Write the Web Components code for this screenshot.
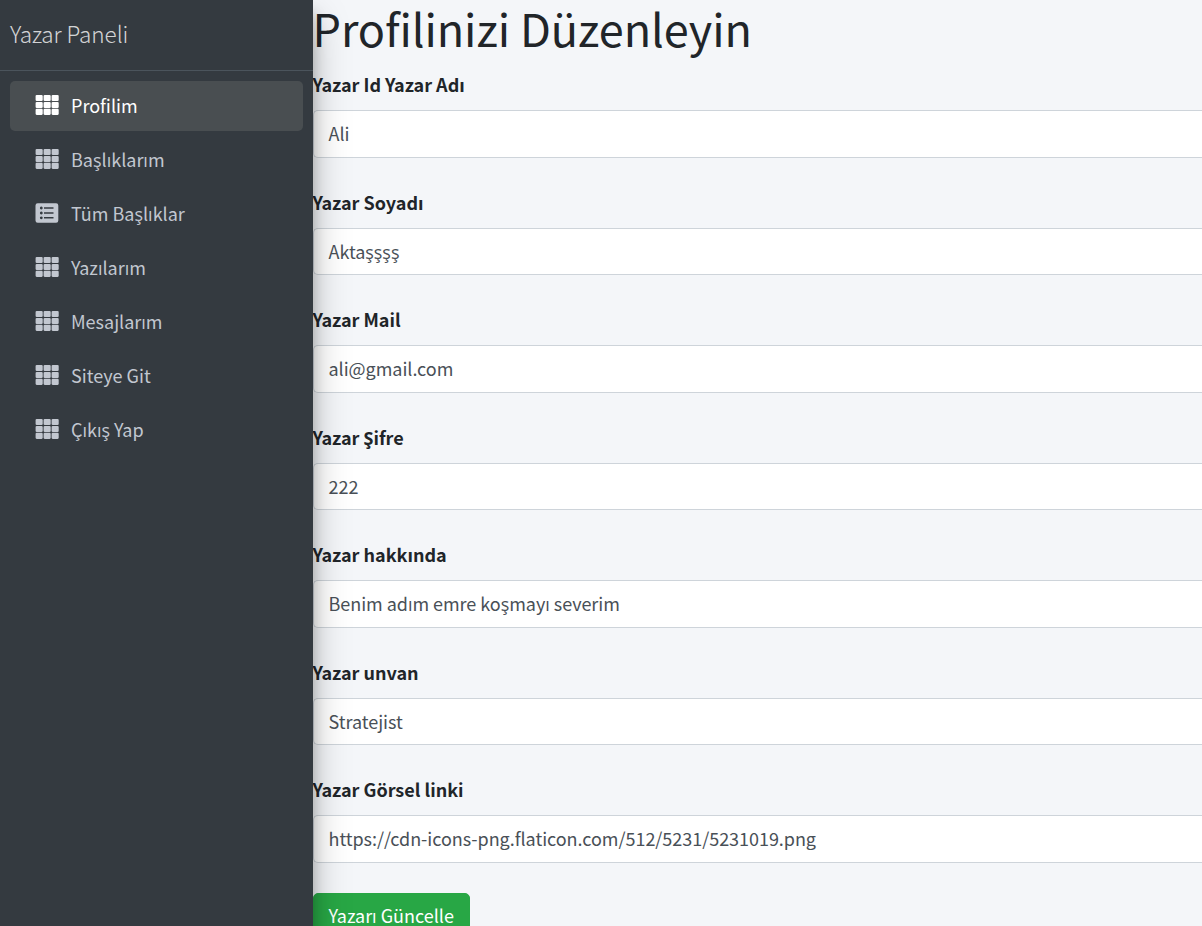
<!DOCTYPE html>
<html lang="tr">
<head>
<meta charset="utf-8">
<title>Yazar Paneli</title>
<style>
html, body { margin: 0; height: 100%; overflow: hidden; background: #f4f6f9; }
body { font-family: "Source Sans Pro", "Noto Sans CJK SC", "Open Sans", sans-serif; font-size: 18px; line-height: 28px; color: #212529; }
</style>
</head>
<body>
<admin-layout>
  <side-bar slot="side" brand="Yazar Paneli">
    <nav-item icon="th" active>Profilim</nav-item>
    <nav-item icon="th">Başlıklarım</nav-item>
    <nav-item icon="list">Tüm Başlıklar</nav-item>
    <nav-item icon="th">Yazılarım</nav-item>
    <nav-item icon="th">Mesajlarım</nav-item>
    <nav-item icon="th">Siteye Git</nav-item>
    <nav-item icon="th">Çıkış Yap</nav-item>
  </side-bar>
  <page-title>Profilinizi Düzenleyin</page-title>
  <form-field label="Yazar Id Yazar Adı">Ali</form-field>
  <form-field label="Yazar Soyadı">Aktaşşşş</form-field>
  <form-field label="Yazar Mail">ali@gmail.com</form-field>
  <form-field label="Yazar Şifre">222</form-field>
  <form-field label="Yazar hakkında">Benim adım emre koşmayı severim</form-field>
  <form-field label="Yazar unvan">Stratejist</form-field>
  <form-field label="Yazar Görsel linki">https://cdn-icons-png.flaticon.com/512/5231/5231019.png</form-field>
  <submit-button>Yazarı Güncelle</submit-button>
</admin-layout>
<script>
const define = (name, render) => customElements.define(name, class extends HTMLElement {
  constructor() { super(); this.attachShadow({ mode: "open" }); }
  connectedCallback() { this.shadowRoot.innerHTML = render(this); }
});

const cells = [0, 1, 2].flatMap(r => [0, 1, 2].map(c =>
  `<rect x="${0.6 + c * 8}" y="${r * 6.9}" width="7.1" height="6.1" rx="1.1"/>`)).join("");
const icons = {
  th: `<svg width="24" height="21" viewBox="0 0 24 21">${cells}</svg>`,
  list: `<svg width="24" height="21" viewBox="0 0.5 24 21"><path fill-rule="evenodd" d="M2.7 .7H21.1a2.2 2.2 0 0 1 2.2 2.2V18a2.2 2.2 0 0 1-2.2 2.2H2.7A2.2 2.2 0 0 1 .5 18V2.9A2.2 2.2 0 0 1 2.7 .7ZM9 4.7v1.6h9.500V4.7ZM9 9.7v1.6h9.500V9.7ZM9 14.5v1.6h9.500v-1.6ZM6.3 4.100a1.400 1.400 0 1 0 .01 0ZM6.3 9.100a1.400 1.400 0 1 0 .01 0ZM6.3 13.900a1.400 1.400 0 1 0 .01 0Z"/></svg>`
};

define("admin-layout", () => `
<style>
:host { display: grid; grid-template-columns: 312.5px minmax(0, 1fr); height: 100vh; overflow: hidden; }
main { min-width: 0; }
</style>
<slot name="side"></slot><main><slot></slot></main>`);

define("side-bar", el => `
<style>
:host { display: block; position: relative; z-index: 1; background: #343a40; box-shadow: 0 17.5px 35px rgba(0,0,0,.25), 0 12.5px 12.5px rgba(0,0,0,.22); }
header { height: 70px; box-sizing: border-box; padding: 15px 10px 0; font-size: 22.5px; line-height: 37.5px; font-weight: 300; letter-spacing: -.06px; color: rgba(255,255,255,.8); }
nav { border-top: 1px solid #4b545c; padding: 10px 10px 0; display: grid; gap: 4px; }
</style>
<header>${el.getAttribute("brand")}</header><nav><slot></slot></nav>`);

define("nav-item", el => `
<style>
:host { display: flex; align-items: center; height: 50px; box-sizing: border-box; padding: 0 20px 0 25px; gap: 12px; border-radius: 5px; color: #c2c7d0; }
:host([active]) { background: #494e51; color: #fff; }
svg { fill: currentColor; flex: none; margin-bottom: 1px; }
span { margin-bottom: 2px; }
</style>
${icons[el.getAttribute("icon")]}<span><slot></slot></span>`);

define("page-title", () => `
<style>
:host { display: block; height: 60px; margin-bottom: 10px; }
h1 { margin: 0; font-size: 45px; line-height: 56px; letter-spacing: -.09px; font-weight: 400; white-space: nowrap; }
</style>
<h1><slot></slot></h1>`);

define("form-field", el => `
<style>
:host { display: block; margin-bottom: 30px; }
label { display: block; height: 30px; font-weight: 700; margin-bottom: 10px; }
.box { box-sizing: border-box; height: 47.5px; padding: 8px 15px; border: 1px solid #ced4da; border-right: 0; border-radius: 5px 0 0 5px; background: #fff; color: #495057; letter-spacing: -.04px; white-space: nowrap; }
</style>
<label>${el.getAttribute("label")}</label><div class="box"><slot></slot></div>`);

define("submit-button", () => `
<style>
:host { display: block; }
button { font: inherit; color: #fff; background: #28a745; border: 1px solid #28a745; border-radius: 5px; height: 47.5px; width: 157.5px; padding: 0 0 2px; white-space: nowrap; }
</style>
<button><slot></slot></button>`);
</script>
</body>
</html>
